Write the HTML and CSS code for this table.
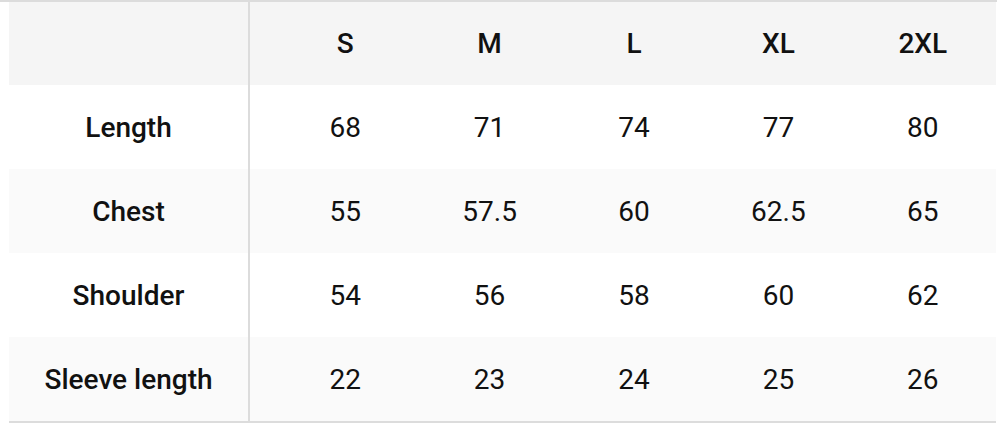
FILE: index.html
```html
<!DOCTYPE html>
<html>
<head>
<meta charset="utf-8">
<link rel="stylesheet" href="styles.css">
</head>
<body>
<div class="topline"></div>
<div class="size-table">
  <div class="row head">
    <div class="label"></div>
    <div class="cells">
      <div class="cell">S</div>
      <div class="cell">M</div>
      <div class="cell">L</div>
      <div class="cell">XL</div>
      <div class="cell">2XL</div>
    </div>
  </div>
  <div class="row">
    <div class="label">Length</div>
    <div class="cells">
      <div class="cell">68</div>
      <div class="cell">71</div>
      <div class="cell">74</div>
      <div class="cell">77</div>
      <div class="cell">80</div>
    </div>
  </div>
  <div class="row alt">
    <div class="label">Chest</div>
    <div class="cells">
      <div class="cell">55</div>
      <div class="cell">57.5</div>
      <div class="cell">60</div>
      <div class="cell">62.5</div>
      <div class="cell">65</div>
    </div>
  </div>
  <div class="row">
    <div class="label">Shoulder</div>
    <div class="cells">
      <div class="cell">54</div>
      <div class="cell">56</div>
      <div class="cell">58</div>
      <div class="cell">60</div>
      <div class="cell">62</div>
    </div>
  </div>
  <div class="row alt">
    <div class="label">Sleeve length</div>
    <div class="cells">
      <div class="cell">22</div>
      <div class="cell">23</div>
      <div class="cell">24</div>
      <div class="cell">25</div>
      <div class="cell">26</div>
    </div>
  </div>
</div>
</body>
</html>
```

FILE: styles.css
```css
* { box-sizing: border-box; }
html, body { margin: 0; padding: 0; background: #ffffff; }
body {
  font-family: Roboto, "Liberation Sans", sans-serif;
  color: #111111;
}
.topline {
  height: 2px;
  background: #dcdcdc;
}
.size-table {
  margin-left: 9px;
  width: 987px;
  border-bottom: 2px solid #dcdcdc;
}
.row {
  display: flex;
  height: 84px;
  background: #ffffff;
}
.row.head {
  height: 83px;
  background: #f5f5f5;
}
.row.alt {
  background: #fafafa;
}
.label {
  flex: 0 0 241px;
  border-right: 2px solid #dcdcdc;
  display: flex;
  align-items: center;
  justify-content: center;
  font-weight: 500;
  font-size: 28px;
  white-space: nowrap;
}
.cells {
  flex: 1;
  display: grid;
  grid-template-columns: repeat(5, 1fr);
  padding: 0 1px 0 23px;
}
.cell {
  display: flex;
  align-items: center;
  justify-content: center;
  font-size: 28px;
  font-weight: 400;
  white-space: nowrap;
}
.head .cell {
  font-weight: 500;
}
```
